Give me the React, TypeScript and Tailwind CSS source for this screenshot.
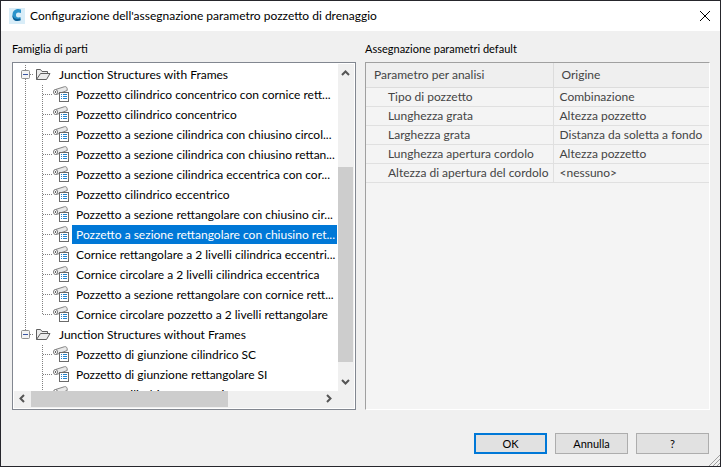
import type { ReactNode } from "react";

const frames = [
  "Pozzetto cilindrico concentrico con cornice rett...",
  "Pozzetto cilindrico concentrico",
  "Pozzetto a sezione cilindrica con chiusino circol...",
  "Pozzetto a sezione cilindrica con chiusino rettan...",
  "Pozzetto a sezione cilindrica eccentrica con cor...",
  "Pozzetto cilindrico eccentrico",
  "Pozzetto a sezione rettangolare con chiusino cir...",
  "Pozzetto a sezione rettangolare con chiusino ret...",
  "Cornice rettangolare a 2 livelli cilindrica eccentri...",
  "Cornice circolare a 2 livelli cilindrica eccentrica",
  "Pozzetto a sezione rettangolare con cornice rett...",
  "Cornice circolare pozzetto a 2 livelli rettangolare",
];

const noFrames = [
  "Pozzetto di giunzione cilindrico SC",
  "Pozzetto di giunzione rettangolare SI",
  "Pozzetto cilindrico concentrico SC",
];

const params = [
  ["Tipo di pozzetto", "Combinazione"],
  ["Lunghezza grata", "Altezza pozzetto"],
  ["Larghezza grata", "Distanza da soletta a fondo"],
  ["Lunghezza apertura cordolo", "Altezza pozzetto"],
  ["Altezza di apertura del cordolo", "<nessuno>"],
];

const AppIcon = () => (
  <svg className="h-4 w-4" viewBox="0 0 16 16">
    <rect width="16" height="16" fill="#d9edf8" />
    <path d="M12 1.500 9.500 1C5.500 1 3.500 3.500 3.500 7c0 4 1.500 5.500 5 5.500l3-.5V9L9.500 9.500C7.500 9.500 7 8.500 7 7s.5-2.500 2.500-2.500l2.500.5z" fill="#2b93cb" />
    <path d="M3.500 7c0 4 1.500 6 5 6l3-.5V10.500L9 11C6 11 4.500 10 3.500 7z" fill="#0c5f96" />
  </svg>
);

const FolderIcon = () => (
  <svg className="h-5 w-[18px] shrink-0" viewBox="0 0 18 20" fill="#ececec" stroke="#5f5f5f">
    <path d="M2.500 14.500v-10h4l1.500 2h5.500v2" />
    <path d="M2.500 14.500 6.500 8.500h9.500l-3.500 6z" />
  </svg>
);

const PartIcon = () => (
  <svg className="h-5 w-[18px] shrink-0" viewBox="0 0 18 20">
    <path d="M3.500 4.500 12.500 1.700c2-.4 3 1 2.700 3.800L4.500 9.500z" fill="#e9e9e9" stroke="#858585" />
    <ellipse cx="3.500" cy="7" rx="2" ry="2.500" fill="#fff" stroke="#777" />
    <path d="M3.500 6v2" stroke="#666" />
    <rect x="7.500" y="7.500" width="9" height="9" fill="#fff" stroke="#6b6b6b" />
    <path d="M9 9.500h1M11 9.500h4M9 11.500h1M11 11.500h4M9 13.500h1M11 13.500h4" stroke="#2485d0" />
  </svg>
);

type GuideProps = { outer?: boolean; last?: boolean };
const Guide = ({ outer, last }: GuideProps) => (
  <svg className="h-5 w-[38px] shrink-0" viewBox="0 0 38 20" stroke="#808080" strokeDasharray="1 1">
    {outer && <path d="M11.500 0v20" />}
    <path d={last ? "M28.500 0v10" : "M28.500 0v20"} />
    <path d="M29 9.500h9" />
  </svg>
);

type PartProps = GuideProps & { name: string; selected?: boolean };
const Part = ({ name, selected, outer, last }: PartProps) => (
  <li role="treeitem" aria-selected={!!selected} className="flex h-5">
    <Guide outer={outer} last={last} />
    <PartIcon />
    <span className={`ml-[2px] h-[19px] whitespace-nowrap pl-1 leading-[19px] ${selected ? "flex-1 bg-[#0078d7] text-white" : ""}`}>
      {name}
    </span>
  </li>
);

type GroupProps = { name: string; end?: boolean; children: ReactNode };
const Group = ({ name, end, children }: GroupProps) => (
  <li role="treeitem" aria-expanded="true" aria-selected="false">
    <div className="flex h-5">
      <button aria-label={`Comprimi ${name}`}>
        <svg className="h-5 w-5" viewBox="0 0 20 20">
          <path d={end ? "M11.500 0v6" : "M11.500 0v20"} stroke="#808080" strokeDasharray="1 1" />
          <path d="M16 9.500h4" stroke="#808080" strokeDasharray="1 1" />
          <rect x="7.500" y="5.500" width="8" height="8" rx="1" fill="#f4f4f4" stroke="#919191" />
          <path d="M9 9.500h5" stroke="#3a56a5" />
        </svg>
      </button>
      <FolderIcon />
      <span className="whitespace-nowrap pl-[7px] leading-[19px]">{name}</span>
    </div>
    <ul role="group">{children}</ul>
  </li>
);

const Arrow = ({ d, label }: { d: string; label: string }) => (
  <button aria-label={label} className="h-4 w-4 shrink-0">
    <svg className="h-4 w-4" viewBox="0 0 16 16" fill="none" stroke="#555" strokeWidth="2">
      <path d={d} />
    </svg>
  </button>
);

const Tree = () => (
  <div className="grid min-h-0 flex-1 grid-cols-[minmax(0,1fr)_16px] grid-rows-[minmax(0,1fr)_17px] border border-[#828790] bg-white p-px">
    <ul role="tree" aria-labelledby="families" className="overflow-hidden pt-px pr-px">
      <Group name="Junction Structures with Frames">
        {frames.map((name, i) => (
          <Part key={name} name={name} outer selected={i === 7} last={i === frames.length - 1} />
        ))}
      </Group>
      <Group name="Junction Structures without Frames" end>
        {noFrames.map((name) => (
          <Part key={name} name={name} />
        ))}
      </Group>
    </ul>
    <div className="flex min-h-0 flex-col bg-[#f0f0f0]">
      <Arrow label="Su" d="M4 11l3.500-3.500L11 11" />
      <div className="flex-[87]" />
      <div className="mr-px flex-[195] bg-[#cdcdcd]" />
      <div className="flex-[13]" />
      <Arrow label="Giù" d="M4 5l3.500 3.500L11 5" />
    </div>
    <div className="flex bg-[#f0f0f0]">
      <Arrow label="Sinistra" d="M10 4 6.500 7.500 10 11" />
      <div className="ml-px mb-px flex-[197] bg-[#cdcdcd]" />
      <div className="flex-[94]" />
      <Arrow label="Destra" d="M5 4l3.500 3.500L5 11" />
    </div>
    <div className="bg-[#f0f0f0]" />
  </div>
);

const ParamTable = () => (
  <div className="flex-1 border border-t-[#a0a0a0] border-r-white border-b-white border-l-[#a0a0a0] bg-[#f4f4f4]">
    <table aria-labelledby="defaults" className="w-full table-fixed border-collapse text-left text-[#444]">
      <thead>
        <tr className="h-6 border-b border-[#dcdcdc] bg-[#efefef]">
          <th className="w-[187px] border-r border-[#dcdcdc] p-0 pl-2 font-normal">Parametro per analisi</th>
          <th className="p-0 pl-2 font-normal">Origine</th>
        </tr>
      </thead>
      <tbody>
        {params.map(([name, source]) => (
          <tr key={name} className="h-[19px] border-b border-[#e0e0e0]">
            <td className="border-r border-[#e0e0e0] p-0 pl-[22px] whitespace-nowrap">{name}</td>
            <td className="p-0 pl-[6px] whitespace-nowrap">{source}</td>
          </tr>
        ))}
      </tbody>
    </table>
  </div>
);

const App = () => {
  return (
    <main className="flex h-screen flex-col border border-[#26262c] bg-[#f0f0f0] font-['Lato','Open_Sans',sans-serif] text-[12px] leading-[18px] text-black">
      <header className="flex h-[30px] shrink-0 items-center bg-white pl-2">
        <AppIcon />
        <h1 className="flex-1 pl-[5px]">Configurazione dell'assegnazione parametro pozzetto di drenaggio</h1>
        <button aria-label="Chiudi" className="mr-[9px]">
          <svg className="h-3 w-3" viewBox="0 0 12 12" stroke="#000">
            <path d="M1 1l10 10M11 1 1 11" />
          </svg>
        </button>
      </header>
      <div className="flex min-h-0 flex-1 gap-[9px] pt-[10px] pr-[10px] pl-[11px]">
        <section className="flex min-w-0 flex-[344] flex-col">
          <h2 id="families" className="h-[21px] text-[11px] leading-[16px]">Famiglia di parti</h2>
          <Tree />
        </section>
        <section className="flex min-w-0 flex-[345] flex-col">
          <h2 id="defaults" className="h-[21px] text-[11px] leading-[16px]">Assegnazione parametri default</h2>
          <ParamTable />
        </section>
      </div>
      <footer className="flex shrink-0 items-end justify-end pt-[23px]">
        <div className="flex gap-2 pb-3 text-[11px] leading-[17px]">
          <button className="w-[73px] border-2 border-[#0078d7] bg-[#e1e1e1]">OK</button>
          <button className="w-[73px] border border-[#adadad] bg-[#e1e1e1]">Annulla</button>
          <button className="w-[73px] border border-[#adadad] bg-[#e1e1e1]">?</button>
        </div>
        <svg className="h-3 w-[11px]" viewBox="0 0 11 12" stroke="#a0a0a0">
          <path d="M0 12 11 1M4 12l7-7M8 12l3-3" />
        </svg>
      </footer>
    </main>
  );
};

export default App;
